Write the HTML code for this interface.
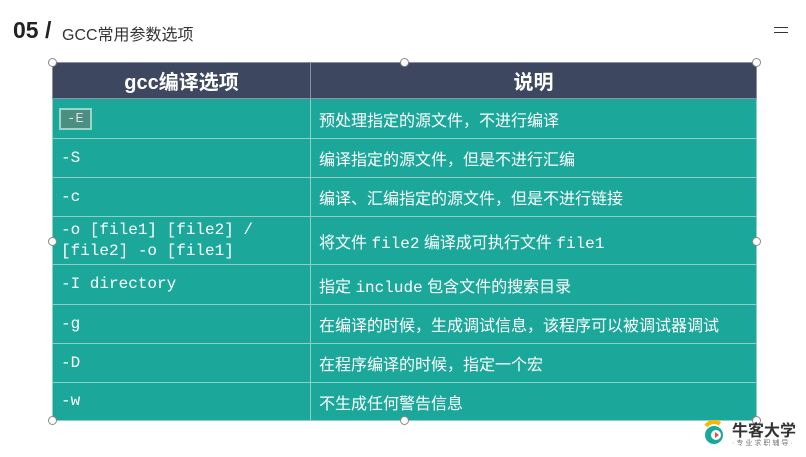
<!DOCTYPE html>
<html><head><meta charset="utf-8"><style>
body{margin:0;width:806px;height:457px;background:#fff;position:relative;overflow:hidden;font-family:"Liberation Sans","Noto Sans CJK SC",sans-serif}
.t{position:absolute;left:13px;top:17px;font-size:23px;font-weight:bold;color:#222}
.s{position:absolute;left:62px;top:21px;font-size:16px;color:#333}
.m{position:absolute;left:774px;top:27px;width:14px;height:1px;background:#333;box-shadow:0 5px 0 #333}
table{position:absolute;left:52px;top:62px;width:705px;border-collapse:collapse}
td,th{border:1px solid #8fcfc6;color:#fff;padding:0 8px;text-align:left;font-size:16px}
th{background:#3d4760;height:35px;text-align:center;font-size:20px;border-color:#8a90a0}
td{background:#1ba89b}
td.c{font-family:"Liberation Mono",monospace;font-size:16px;width:241px;line-height:21px}
td.d{font-family:"Liberation Sans","Noto Sans CJK SC",sans-serif}
.mo{font-family:'Liberation Mono',monospace}
.h{position:absolute;width:7px;height:7px;border:1px solid #888;border-radius:50%;background:#fff}
.e{display:inline-block;background:#4a8f80;border:2px solid #9ad4cb;padding:1px 6px;color:#ddd;font-size:14px;line-height:16px;margin-left:-2px}
</style></head><body>
<div class="t">05 /</div><div class="s">GCC常用参数选项</div><div class="m"></div>
<table>
<tr><th>gcc编译选项</th><th>说明</th></tr>
<tr style="height:40px"><td class="c"><span class="e">-E</span></td><td class="d">预处理指定的源文件，不进行编译</td></tr>
<tr style="height:39px"><td class="c">-S</td><td class="d">编译指定的源文件，但是不进行汇编</td></tr>
<tr style="height:39px"><td class="c">-c</td><td class="d">编译、汇编指定的源文件，但是不进行链接</td></tr>
<tr style="height:48px"><td class="c">-o [file1] [file2] /<br>[file2] -o [file1]</td><td class="d">将文件 <span class="mo">file2</span> 编译成可执行文件 <span class="mo">file1</span></td></tr>
<tr style="height:40px"><td class="c">-I directory</td><td class="d">指定 <span class="mo">include</span> 包含文件的搜索目录</td></tr>
<tr style="height:39px"><td class="c">-g</td><td class="d">在编译的时候，生成调试信息，该程序可以被调试器调试</td></tr>
<tr style="height:39px"><td class="c">-D</td><td class="d">在程序编译的时候，指定一个宏</td></tr>
<tr style="height:38px"><td class="c">-w</td><td class="d">不生成任何警告信息</td></tr>
</table>
<div class="h" style="left:48px;top:58px"></div><div class="h" style="left:400px;top:58px"></div><div class="h" style="left:752px;top:58px"></div>
<div class="h" style="left:48px;top:237px"></div><div class="h" style="left:752px;top:237px"></div>
<div class="h" style="left:48px;top:416px"></div><div class="h" style="left:400px;top:416px"></div><div class="h" style="left:752px;top:416px"></div>
<svg style="position:absolute;left:700px;top:420px" width="28" height="26"><path d="M6 6a10 10 0 0 1 14-2" stroke="#f5b800" stroke-width="4" fill="none"/><circle cx="14" cy="15" r="9" fill="#1aa89a"/><circle cx="16" cy="15" r="5" fill="#fff"/><path d="M15 12l4 3-4 3z" fill="#e84c3d"/></svg>
<div style="position:absolute;left:732px;top:417px;font-size:16px;font-weight:bold;color:#333">牛客大学</div>
<div style="position:absolute;left:732px;top:438px;font-size:7px;color:#777;letter-spacing:2px">·专业求职辅导·</div>
</body></html>
